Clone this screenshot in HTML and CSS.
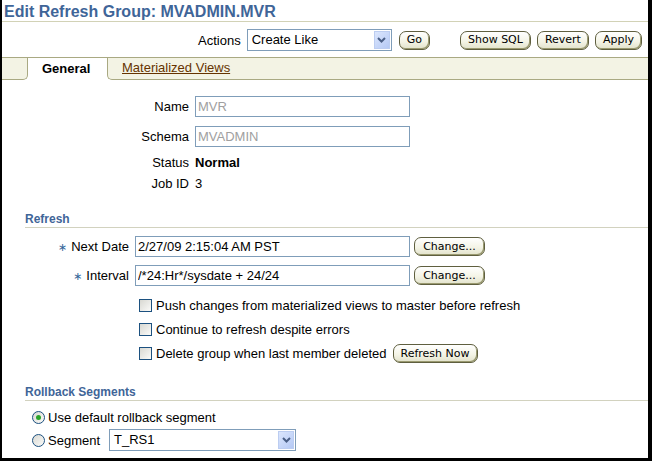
FILE: index.html
```html
<!DOCTYPE html>
<html>
<head>
<meta charset="utf-8">
<title>Edit Refresh Group</title>
<link rel="stylesheet" href="styles.css">
</head>
<body>
<div class="frame">
  <h1 class="title">Edit Refresh Group: MVADMIN.MVR</h1>

  <div class="actions">
    <span class="actions-label">Actions</span>
    <div class="select sel-actions">
      <span class="sel-text">Create Like</span>
      <span class="sel-btn"><svg width="9" height="6" viewBox="0 0 9 6"><path d="M1 1 L4.5 4.5 L8 1" fill="none" stroke="#4a5f86" stroke-width="2"/></svg></span>
    </div>
    <button class="btn btn-go">Go</button>
    <div class="btn-group">
      <button class="btn">Show SQL</button>
      <button class="btn">Revert</button>
      <button class="btn">Apply</button>
    </div>
  </div>

  <div class="tabs">
    <div class="tab-fill tab-left"></div>
    <div class="tab-active">General</div>
    <div class="tab-fill tab-right"><a class="tab-link" href="#">Materialized Views</a></div>
  </div>

  <div class="general">
    <span class="label">Name</span>
    <input class="field field-ro w215" value="MVR" readonly>
    <span class="label">Schema</span>
    <input class="field field-ro w215" value="MVADMIN" readonly>
    <span class="label">Status</span>
    <span class="value-bold">Normal</span>
    <span class="label">Job ID</span>
    <span class="value">3</span>
  </div>

  <section class="section refresh">
    <div class="section-head">Refresh</div>
    <div class="fields">
      <span class="label"><span class="req">&#x2217;</span>Next Date</span>
      <div class="field-cell"><input class="field w275" value="2/27/09 2:15:04 AM PST"><button class="btn btn-change">Change...</button></div>
      <span class="label"><span class="req">&#x2217;</span>Interval</span>
      <div class="field-cell"><input class="field w275" value="/*24:Hr*/sysdate + 24/24"><button class="btn btn-change">Change...</button></div>
    </div>
    <div class="checks">
      <div class="check"><span class="cb"></span>Push changes from materialized views to master before refresh</div>
      <div class="check"><span class="cb"></span>Continue to refresh despite errors</div>
      <div class="check check-last"><span class="cb"></span>Delete group when last member deleted<button class="btn btn-refresh">Refresh Now</button></div>
    </div>
  </section>

  <section class="section rollback">
    <div class="section-head">Rollback Segments</div>
    <div class="radio-row radio-first"><span class="radio radio-on"></span>Use default rollback segment</div>
    <div class="radio-row radio-second"><span class="radio"></span><span class="seg-label">Segment</span>
      <div class="select sel-seg">
        <span class="sel-text">T_RS1</span>
        <span class="sel-btn"><svg width="9" height="6" viewBox="0 0 9 6"><path d="M1 1 L4.5 4.5 L8 1" fill="none" stroke="#4a5f86" stroke-width="2"/></svg></span>
      </div>
    </div>
  </section>
</div>
</body>
</html>
```

FILE: styles.css
```css
* { box-sizing: border-box; }
html, body { margin: 0; padding: 0; background: #fff; }
body {
  font-family: "Liberation Sans", Arial, sans-serif;
  font-size: 13px;
  color: #000;
}
.frame {
  width: 652px;
  height: 461px;
  border-left: 2px solid #000;
  border-right: 4px solid #000;
  border-bottom: 3px solid #000;
  overflow: hidden;
}
.title {
  margin: 0;
  height: 22px;
  padding: 2px 0 0 2px;
  font-size: 16px;
  line-height: 19px;
  font-weight: bold;
  color: #3f6598;
  border-bottom: 1px solid #d2d2b6;
}

/* actions row */
.actions {
  margin-top: 7px;
  height: 22px;
  display: flex;
  align-items: center;
  justify-content: flex-end;
  padding-right: 6px;
}
.actions-label { margin-right: 6px; }
.select {
  display: flex;
  align-items: stretch;
  height: 22px;
  border: 1px solid #7f9db9;
  background: #fff;
  padding: 1px;
}
.sel-text { flex: 1; padding-left: 3px; line-height: 18px; }
.sel-btn {
  width: 16px;
  display: flex;
  align-items: center;
  justify-content: center;
  background: linear-gradient(135deg, #dbe6fd, #b5c9f5);
  border: 1px solid #bccdf1;
}
.sel-actions { width: 145px; }
.btn-go { margin-left: 7px; }
.btn-group { display: flex; gap: 6px; margin-left: 30px; }

.btn {
  height: 19px;
  padding: 0 7px;
  font-family: "DejaVu Sans", Verdana, sans-serif;
  font-size: 11px;
  line-height: 16px;
  color: #000;
  background: linear-gradient(#ffffff, #f4f4e6 55%, #e2e2cb);
  border: 1px solid #5f5f3f;
  border-radius: 7px;
  box-shadow: inset -1px -1px 0 #9a9a70;
  cursor: pointer;
}

/* tabs */
.tabs {
  margin-top: 6px;
  height: 23px;
  display: flex;
  border-top: 1px solid #a9a982;
  background: #fff;
}
.tab-fill {
  height: 22px;
  background: #f3f3e4;
  border-bottom: 1px solid #a9a982;
}
.tab-left {
  width: 26px;
  border-right: 1px solid #a9a982;
  border-bottom-right-radius: 5px;
}
.tab-active {
  width: 79px;
  height: 22px;
  font-weight: bold;
  line-height: 21px;
  padding-left: 14px;
}
.tab-right {
  flex: 1;
  border-left: 1px solid #a9a982;
  border-bottom-left-radius: 5px;
  padding-left: 14px;
  line-height: 20px;
}
.tab-link { color: #663300; text-decoration: underline; }

/* general */
.general {
  padding-top: 11px;
  display: grid;
  grid-template-columns: 187px 1fr;
  grid-template-rows: 30px 30px 22px 20px;
  column-gap: 6px;
  align-items: center;
}
.label { text-align: right; }
.value-bold { font-weight: bold; }
.field {
  height: 21px;
  border: 1px solid #7f9db9;
  padding: 0 2px;
  font-family: "Liberation Sans", Arial, sans-serif;
  font-size: 13px;
  color: #000;
  outline: none;
}
.field-ro { color: #a0a0a0; }
.w215 { width: 215px; }
.w275 { width: 275px; }

/* sections */
.section { margin-left: 23px; }
.section-head {
  height: 16px;
  font-size: 12px;
  font-weight: bold;
  line-height: 15px;
  color: #3f6598;
  border-bottom: 1px solid #d2d2bf;
}
.refresh { margin-top: 19px; }
.fields {
  margin-top: 4px;
  display: grid;
  grid-template-columns: 104px 1fr;
  grid-template-rows: 29px 29px;
  column-gap: 6px;
  align-items: center;
}
.req {
  color: #336699;
  font-family: "DejaVu Sans", sans-serif;
  font-size: 11px;
  margin-right: 4px;
}
.field-cell { display: flex; align-items: center; gap: 4px; }
.btn-change { width: 71px; padding: 0; }

.checks { margin-left: 110px; padding-top: 3px; }
.check {
  height: 24px;
  display: flex;
  align-items: center;
}
.check-last { height: 25px; }
.cb {
  width: 13px;
  height: 13px;
  margin: 0 4px 0 4px;
  border: 1px solid #1c5180;
  background: linear-gradient(135deg, #d8d8d2, #fbfbf9);
}
.btn-refresh { margin-left: 6px; }

.rollback { margin-top: 19px; }
.radio-row {
  display: flex;
  align-items: center;
  padding-left: 7px;
}
.radio-first { margin-top: 5px; height: 22px; }
.radio-second { height: 24px; }
.radio {
  width: 13px;
  height: 13px;
  border-radius: 50%;
  border: 1px solid #1c5180;
  background: linear-gradient(135deg, #d8d8d2, #fbfbf9);
  margin-right: 3px;
  display: flex;
  align-items: center;
  justify-content: center;
}
.radio-on::after {
  content: "";
  width: 5px;
  height: 5px;
  border-radius: 50%;
  background: #2aa52a;
}
.seg-label { margin-right: 9px; }
.sel-seg { width: 187px; }
```
